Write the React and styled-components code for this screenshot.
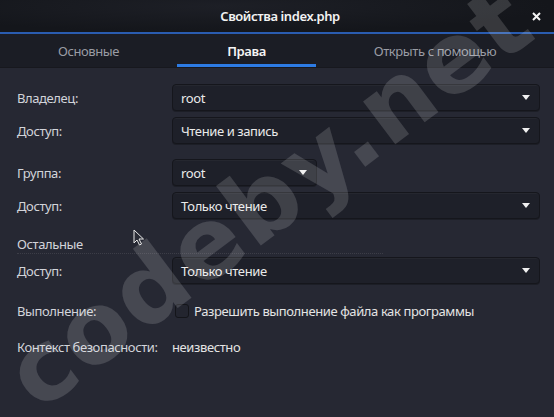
import React from "react";
import styled, { createGlobalStyle } from "styled-components";

const GlobalStyle = createGlobalStyle`
  html, body {
    margin: 0;
    padding: 0;
    background: #262833;
  }
  body {
    font-family: "Noto Sans", "DejaVu Sans", sans-serif;
  }
`;

const Window = styled.div`
  position: relative;
  width: 554px;
  height: 417px;
  overflow: hidden;
  background: #262833;
  color: #d4d6dc;
  font-size: 13px;
  letter-spacing: -0.4px;
`;

const TitleBar = styled.header`
  display: grid;
  grid-template-columns: 1fr auto 1fr;
  align-items: center;
  height: 32px;
  background: radial-gradient(ellipse at 40% 20%, #1d1f26 0%, #14161b 70%);
  border-bottom: 2px solid #2a5cb0;
`;

const Title = styled.div`
  grid-column: 2;
  color: #f2f2f2;
  font-weight: 600;
  font-size: 13px;
  padding-left: 6px;
`;

const Close = styled.button`
  justify-self: end;
  margin-right: 11px;
  width: 14px;
  height: 14px;
  padding: 0;
  border: none;
  background: transparent;
  display: flex;
  align-items: center;
  justify-content: center;
`;

const TabBar = styled.nav`
  display: grid;
  grid-template-columns: 177px 139px 1fr;
  height: 33px;
  background: #1b1d25;
  border-bottom: 1px solid #17181e;
`;

const Tab = styled.div`
  display: flex;
  align-items: center;
  justify-content: center;
  color: ${(p) => (p.active ? "#f4f4f4" : "#9a9ca4")};
  font-weight: ${(p) => (p.active ? 600 : 400)};
  box-shadow: ${(p) => (p.active ? "inset 0 -3px 0 #2d7be4" : "none")};
`;

const Content = styled.div`
  display: flex;
  flex-direction: column;
  padding: 16px 14px 0 17px;
`;

const Row = styled.div`
  display: grid;
  grid-template-columns: 155px 1fr;
  align-items: center;
  min-height: ${(p) => p.h || 18}px;
  margin-top: ${(p) => p.mt || 0}px;
`;

const Label = styled.span`
  color: #d2d4da;
`;

const Section = styled.div`
  margin-top: ${(p) => p.mt || 0}px;
  height: 18px;
  line-height: 18px;
  color: #d2d4da;
  width: 366px;
  border-bottom: 1px dotted rgba(255, 255, 255, 0.1);
`;

const Combo = styled.div`
  display: flex;
  align-items: center;
  justify-content: space-between;
  box-sizing: border-box;
  height: 27px;
  width: ${(p) => (p.narrow ? "145px" : "100%")};
  padding: 0 9px 0 8px;
  background: #1e2029;
  border: 1px solid #15161c;
  border-radius: 4px;
  box-shadow: inset 0 1px 0 rgba(255, 255, 255, 0.03), 0 1px 0 rgba(0, 0, 0, 0.25);
  color: #eaeaea;
`;

const Arrow = styled.span`
  width: 0;
  height: 0;
  border-left: 4px solid transparent;
  border-right: 4px solid transparent;
  border-top: 5px solid #f0f0f0;
`;

const CheckLine = styled.label`
  display: flex;
  align-items: center;
  gap: 5px;
  margin-left: 3px;
  color: #e4e4e4;
`;

const Box = styled.span`
  box-sizing: border-box;
  width: 14px;
  height: 14px;
  border: 1px solid #14151a;
  border-radius: 3px;
  background: #23252f;
`;

const Value = styled.span`
  color: #e4e4e4;
`;

const Watermark = styled.div`
  position: absolute;
  left: -45px;
  top: 140px;
  transform: rotate(-37deg);
  transform-origin: center;
  font-family: "DejaVu Sans", sans-serif;
  font-weight: 700;
  font-size: 98px;
  letter-spacing: 2px;
  color: rgba(255, 255, 255, 0.15);
  white-space: nowrap;
  pointer-events: none;
`;

const Cursor = styled.svg`
  position: absolute;
  left: 133px;
  top: 229px;
`;

const Select = ({ value, narrow }) => (
  <Combo narrow={narrow}>
    <span>{value}</span>
    <Arrow />
  </Combo>
);

export default function App() {
  return (
    <Window>
      <GlobalStyle />
      <TitleBar>
        <Title>Свойства index.php</Title>
        <Close aria-label="close">
          <svg width="9" height="9" viewBox="0 0 9 9">
            <path d="M1 1L8 8M8 1L1 8" stroke="#f4f4f4" strokeWidth="2" />
          </svg>
        </Close>
      </TitleBar>
      <TabBar>
        <Tab>Основные</Tab>
        <Tab active>Права</Tab>
        <Tab>Открыть с помощью</Tab>
      </TabBar>
      <Content>
        <Row h={27}>
          <Label>Владелец:</Label>
          <Select value="root" />
        </Row>
        <Row h={27} mt={6}>
          <Label>Доступ:</Label>
          <Select value="Чтение и запись" />
        </Row>
        <Row h={27} mt={15}>
          <Label>Группа:</Label>
          <Select value="root" narrow />
        </Row>
        <Row h={27} mt={6}>
          <Label>Доступ:</Label>
          <Select value="Только чтение" />
        </Row>
        <Section mt={16}>Остальные</Section>
        <Row h={27} mt={3}>
          <Label>Доступ:</Label>
          <Select value="Только чтение" />
        </Row>
        <Row mt={18}>
          <Label>Выполнение:</Label>
          <CheckLine>
            <Box />
            Разрешить выполнение файла как программы
          </CheckLine>
        </Row>
        <Row mt={18}>
          <Label>Контекст безопасности:</Label>
          <Value>неизвестно</Value>
        </Row>
      </Content>
      <Watermark>codeby.net</Watermark>
      <Cursor width="12" height="17" viewBox="0 0 12 17">
        <path d="M1 1L1 14L4 11L6.5 16L8.5 15L6 10L10.5 10Z" fill="#2a2c36" stroke="#e8e8e8" strokeWidth="1" />
      </Cursor>
    </Window>
  );
}
